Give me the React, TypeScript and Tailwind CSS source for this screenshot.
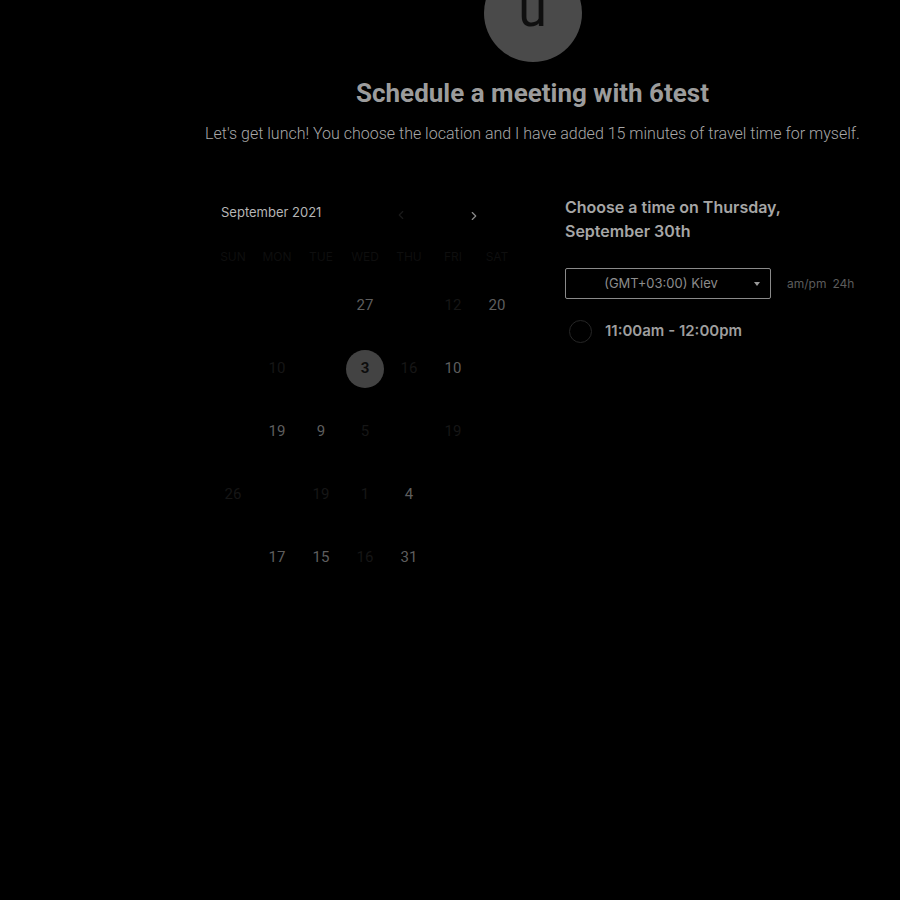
import { ChevronLeft, ChevronRight } from "lucide-react";

type Cell = { label: string; tone: "on" | "dim" | "sel" } | null;

const days = ["SUN", "MON", "TUE", "WED", "THU", "FRI", "SAT"];

// weeks as they show up in the picture (the data is a bit odd)
const weeks: Cell[][] = [
  [null, null, null, { label: "27", tone: "on" }, null, { label: "12", tone: "dim" }, { label: "20", tone: "on" }],
  [null, { label: "10", tone: "dim" }, null, { label: "3", tone: "sel" }, { label: "16", tone: "dim" }, { label: "10", tone: "on" }, null],
  [null, { label: "19", tone: "on" }, { label: "9", tone: "on" }, { label: "5", tone: "dim" }, null, { label: "19", tone: "dim" }, null],
  [{ label: "26", tone: "dim" }, null, { label: "19", tone: "dim" }, { label: "1", tone: "dim" }, { label: "4", tone: "on" }, null, null],
  [null, { label: "17", tone: "on" }, { label: "15", tone: "on" }, { label: "16", tone: "dim" }, { label: "31", tone: "on" }, null, null],
];

function DayCell({ cell }: { cell: Cell }) {
  if (!cell) return <div className="h-[63px]" />;
  if (cell.tone === "sel") {
    return (
      <div className="h-[63px] flex items-center justify-center">
        <span className="w-[38px] h-[38px] rounded-full bg-[#434343] flex items-center justify-center text-[15px] font-bold text-[#0d0d0d]">
          {cell.label}
        </span>
      </div>
    );
  }
  return (
    <div
      className={
        "h-[63px] flex items-center justify-center text-[15px] " +
        (cell.tone === "on" ? "text-[#5e5e5e]" : "text-[#161616]")
      }
    >
      {cell.label}
    </div>
  );
}

export default function App() {
  return (
    <div className="min-h-[900px] bg-black flex font-['Roboto',sans-serif] overflow-hidden">
      <div className="w-[165px] shrink-0" />
      <main className="flex-1 flex flex-col items-center">
        <div className="-mt-[36px] w-[98px] h-[98px] rounded-full bg-[#4a4a4a] flex items-center justify-center">
          <span className="text-[52px] leading-none text-[#0f0f0f] -mt-[8px]">u</span>
        </div>
        <h1 className="mt-[16px] text-[26px] leading-[30px] font-bold text-[#9c9c9c]">
          Schedule a meeting with 6test
        </h1>
        <p className="mt-[16px] text-[16px] leading-[20px] font-light text-[#a8a8a8]">
          Let's get lunch! You choose the location and I have added 15 minutes of travel time for myself.
        </p>

        <div className="mt-[55px] w-[655px] flex font-['Inter',sans-serif]">
          <section className="w-[360px] pl-[6px]">
            <div className="w-[308px]">
              <div className="flex items-center h-[24px] pl-[10px] mt-[2px]">
                <span className="text-[13px] text-[#b5b5b5]">September 2021</span>
                <ChevronLeft className="ml-[73px] mt-[4px] w-[14px] h-[14px] text-[#1a1a1a]" strokeWidth={2} />
                <ChevronRight className="ml-[59px] mt-[6px] w-[14px] h-[14px] text-[#8a8a8a]" strokeWidth={2} />
              </div>
              <div className="grid grid-cols-7 mt-[20px] h-[24px] items-center">
                {days.map((d) => (
                  <span key={d} className="text-center text-[12px] text-[#0e0e0e]">
                    {d}
                  </span>
                ))}
              </div>
              <div className="mt-[5px] font-['Roboto',sans-serif]">
                {weeks.map((w, i) => (
                  <div key={i} className="grid grid-cols-7">
                    {w.map((c, j) => (
                      <DayCell key={j} cell={c} />
                    ))}
                  </div>
                ))}
              </div>
            </div>
          </section>

          <section className="flex-1 -mt-[4px]">
            <h2 className="text-[16px] leading-[24px] font-semibold text-[#a6a6a6]">
              Choose a time on Thursday,
              <br />
              September 30th
            </h2>
            <div className="mt-[25px] flex items-center">
              <div className="w-[206px] h-[31px] border border-[#8a8a8a] rounded-[2px] flex items-center relative">
                <span className="w-full text-center pr-[14px] text-[13px] text-[#8c8c8c]">(GMT+03:00) Kiev</span>
                <span className="absolute right-[10px] top-[13px] w-0 h-0 border-l-[3px] border-r-[3px] border-t-[4px] border-l-transparent border-r-transparent border-t-[#9a9a9a]" />
              </div>
              <span className="ml-[16px] text-[12px] text-[#5c5c5c]">am/pm</span>
              <span className="ml-[6px] text-[12px] text-[#5c5c5c]">24h</span>
            </div>
            <label className="mt-[21px] flex items-center">
              <span className="ml-[4px] w-[23px] h-[23px] rounded-full border border-[#262626]" />
              <span className="ml-[13px] text-[15px] font-semibold text-[#9e9e9e]">11:00am - 12:00pm</span>
            </label>
          </section>
        </div>
      </main>
    </div>
  );
}
